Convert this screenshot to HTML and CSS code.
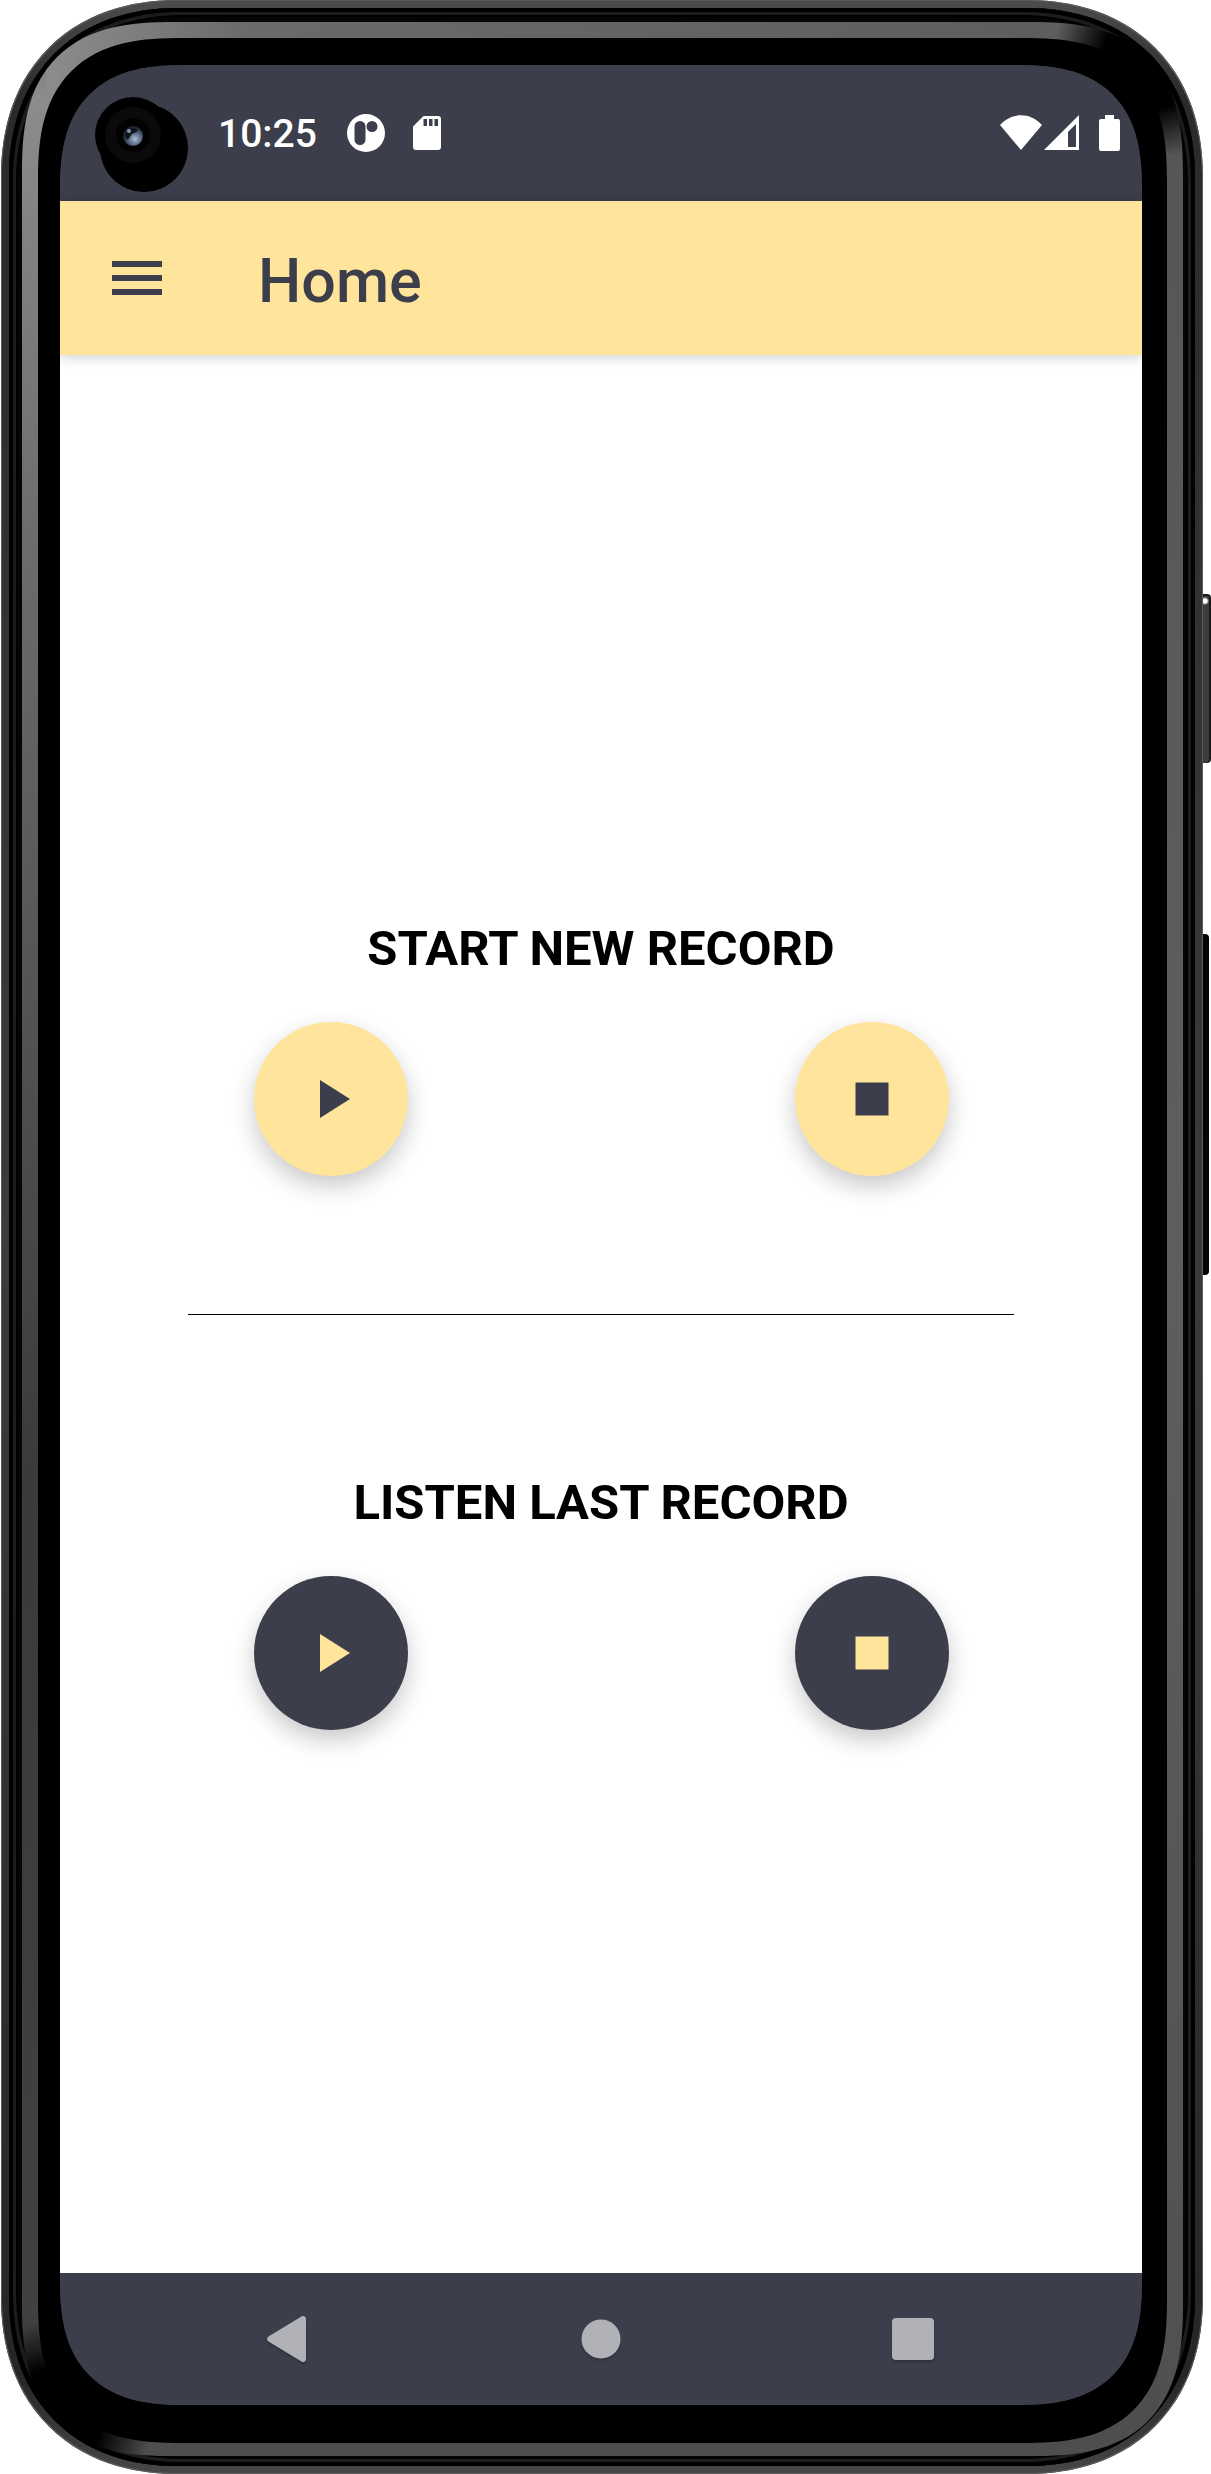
FILE: index.html
```html
<!DOCTYPE html>
<html lang="en">
<head>
<meta charset="utf-8">
<meta name="viewport" content="width=device-width, initial-scale=1">
<title>Home</title>
<link rel="stylesheet" href="styles.css">
</head>
<body>
<div class="phone">
  <span class="side-key side-key-power"></span>
  <span class="side-key side-key-volume"></span>
  <div class="shell">
    <div class="gloss">
      <div class="bezel">
        <div class="screen">
          <svg class="camera" width="94" height="96" viewBox="0 0 94 96" aria-hidden="true">
            <defs>
              <radialGradient id="lens" cx="0.6" cy="0.65" r="0.6">
                <stop offset="0" stop-color="#a9bbdc"/>
                <stop offset="0.5" stop-color="#5c6b85"/>
                <stop offset="1" stop-color="#1b2230"/>
              </radialGradient>
            </defs>
            <circle cx="38" cy="38" r="38"/>
            <circle cx="49" cy="51" r="44"/>
            <circle cx="38" cy="38" r="28" fill="#0a0a0a"/>
            <circle cx="38" cy="38" r="17" fill="#020202"/>
            <circle cx="38" cy="39" r="10" fill="url(#lens)"/>
            <path d="M30 37c3-6 9-8 13-4-2 4-5 2-7 5s-2 5-5 4z" fill="#10141c"/>
            <circle cx="34" cy="34" r="2" fill="#8494b0"/>
          </svg>
          <header class="status-bar">
            <time class="clock">10:25</time>
            <svg width="38" height="38" viewBox="0 0 38 38" aria-hidden="true">
              <path fill="#fff" fill-rule="evenodd" d="M19 0a19 19 0 1 1 0 38a19 19 0 0 1 0-38zM13 7a5.500 5.500 0 0 0-5.500 5.500v13a5.500 5.500 0 0 0 11 0v-13A5.500 5.500 0 0 0 13 7zM25 7a5.500 5.500 0 1 0 0 11a5.500 5.500 0 0 0 0-11z"/>
            </svg>
            <svg class="sd-card" width="28" height="36" viewBox="0 0 28 36" aria-hidden="true">
              <path fill="#fff" fill-rule="evenodd" d="M10.500 1H25a3 3 0 0 1 3 3v28a3 3 0 0 1-3 3H3a3 3 0 0 1-3-3V11.500zM10.500 4v7h3.500V4zM16 4v7h3.500V4zM21.500 4v7H25V4z"/>
            </svg>
            <div class="signals">
              <svg width="42" height="36" viewBox="0 0 42 36" aria-hidden="true">
                <path fill="#fff" d="M0 10C12-3 30-3 42 10L21 35z"/>
              </svg>
              <svg width="35" height="36" viewBox="0 0 35 36" aria-hidden="true">
                <path fill="#fff" fill-rule="evenodd" d="M35 0v35H0zM32 9l-8 8v15h8z"/>
              </svg>
              <svg class="battery" width="21" height="36" viewBox="0 0 21 36" aria-hidden="true">
                <path fill="#fff" d="M6 0h9v4h4a2 2 0 0 1 2 2v28a2 2 0 0 1-2 2H2a2 2 0 0 1-2-2V6a2 2 0 0 1 2-2h4z"/>
              </svg>
            </div>
          </header>

          <div class="app-bar">
            <button class="icon-button" type="button" aria-label="Open menu">
              <svg width="50" height="34" viewBox="0 0 50 34" aria-hidden="true">
                <path fill="currentColor" d="M0 0h50v6H0zM0 14h50v6H0zM0 28h50v6H0z"/>
              </svg>
            </button>
            <h1 class="title">Home</h1>
          </div>

          <main class="content">
            <section class="group-record">
              <h2 class="heading">START NEW RECORD</h2>
              <div class="actions">
                <button class="fab" type="button" aria-label="Start recording">
                  <svg width="64" height="64" viewBox="0 0 64 64" aria-hidden="true"><path fill="currentColor" d="M21 13v38l30-19z"/></svg>
                </button>
                <button class="fab" type="button" aria-label="Stop recording">
                  <svg width="64" height="64" viewBox="0 0 64 64" aria-hidden="true"><path fill="currentColor" d="M15.500 15.500h33v33h-33z"/></svg>
                </button>
              </div>
            </section>
            <hr class="divider">
            <section class="group-listen">
              <h2 class="heading">LISTEN LAST RECORD</h2>
              <div class="actions">
                <button class="fab fab-dark" type="button" aria-label="Play last record">
                  <svg width="64" height="64" viewBox="0 0 64 64" aria-hidden="true"><path fill="currentColor" d="M21 13v38l30-19z"/></svg>
                </button>
                <button class="fab fab-dark" type="button" aria-label="Stop playing">
                  <svg width="64" height="64" viewBox="0 0 64 64" aria-hidden="true"><path fill="currentColor" d="M15.500 15.500h33v33h-33z"/></svg>
                </button>
              </div>
            </section>
          </main>

          <nav class="nav-bar" aria-label="System">
            <button class="icon-button" type="button" aria-label="Back">
              <svg width="46" height="46" viewBox="0 0 46 46" aria-hidden="true"><path fill="currentColor" d="M37 .8a3 3 0 0 1 5 2.200v40a3 3 0 0 1-5 2.200L4.500 25.500a3 3 0 0 1 0-5z"/></svg>
            </button>
            <button class="icon-button" type="button" aria-label="Home screen">
              <svg width="46" height="46" viewBox="0 0 46 46" aria-hidden="true"><circle cx="24" cy="23" r="19.500" fill="currentColor"/></svg>
            </button>
            <button class="icon-button" type="button" aria-label="Recent apps">
              <svg width="46" height="46" viewBox="0 0 46 46" aria-hidden="true"><rect x="2" y="2" width="42" height="42" rx="4" fill="currentColor"/></svg>
            </button>
          </nav>
        </div>
      </div>
    </div>
  </div>
</div>
</body>
</html>
```
FILE: styles.css
```css
:root {
  --ink: #3d3e4b;
  --sand: #ffe49c;
  --corner: superellipse(1.4);
}

* {
  box-sizing: border-box;
}

body {
  margin: 0;
  background: #fff;
  font-family: Roboto, "Noto Sans", sans-serif;
}

svg {
  display: block;
  flex: none;
}

/* Phone body: nested rings from the outer rim in to the glass */
.phone {
  position: relative;
  display: flex;
  min-height: 100vh;
  margin: 0 8px 0 1px;
  padding: 8px;
  border-radius: 160px;
  background: linear-gradient(#4c4c4a, #2a2a2a 4%, #3a3c3b 50%, #262626 96%, #484646);
  box-shadow: inset 0 0 0 1px #5c5c5c;
}

.shell {
  display: flex;
  flex: 1;
  padding: 14px 12px 10px 13px;
  border-radius: 154px;
  background: #050505;
  box-shadow: inset 0 0 0 4px #000, inset 0 0 0 7px #1c1c1c, inset 0 0 0 9px #000;
}

.gloss {
  display: flex;
  flex: 1;
  padding: 16px 16px 13px;
  border-radius: 134px;
  background:
    radial-gradient(circle at calc(100% - 30px) 36px, #000 50px, transparent 100px),
    radial-gradient(circle at 30px calc(100% - 36px), #000 50px, transparent 100px),
    linear-gradient(#6a6a6a, #8c8c8c 3%, #6e6e6e 20%, #3a3a3a 60%, #424242) left / 24px 100% no-repeat,
    linear-gradient(#555, #5e5e5e 50%, #505050) right / 24px 100% no-repeat,
    linear-gradient(90deg, #909090, #6a6a6a 20%, #5c5c5c) top / 100% 50% no-repeat,
    linear-gradient(#4e4e4e, #4e4e4e) bottom / 100% 50% no-repeat;
}

.bezel {
  display: flex;
  flex: 1;
  padding: 27px 25px 38px 22px;
  border-radius: 122px;
  background: #000;
}

.screen {
  position: relative;
  display: flex;
  flex: 1;
  flex-direction: column;
  overflow: hidden;
  border-radius: 104px;
  background: var(--ink);
}

@supports (corner-shape: squircle) {
  .phone,
  .shell {
    border-radius: 178px;
    corner-shape: superellipse(1.15);
  }

  .shell {
    border-radius: 170px;
  }

  .gloss,
  .bezel,
  .screen {
    border-radius: 152px;
    corner-shape: var(--corner);
  }

  .bezel {
    border-radius: 144px;
  }

  .screen {
    border-radius: 128px;
  }
}

.side-key {
  position: absolute;
  left: 100%;
  border-radius: 0 4px 4px 0;
}

.side-key-power {
  top: 24%;
  width: 8px;
  height: 169px;
  background: radial-gradient(circle at 2px 7px, #fff 2px, transparent 4px), #3c3c3c;
  box-shadow: inset -2px 0 0 #1a1a1a, inset 0 2px 0 #1a1a1a;
}

.side-key-volume {
  top: 38%;
  width: 6px;
  height: 341px;
  margin-top: -6px;
  background: #050505;
}

.camera {
  position: absolute;
  top: 32px;
  left: 35px;
}

.status-bar {
  display: flex;
  align-items: center;
  height: 136px;
  padding: 0 22px 0 158px;
  background: var(--ink);
  color: #fff;
}

.clock {
  padding-top: 2px;
  margin-right: 30px;
  font-size: 39px;
  font-weight: 500;
  line-height: 48px;
}

.sd-card {
  margin-left: 28px;
}

.signals {
  display: flex;
  gap: 2px;
  margin-left: auto;
}

.battery {
  margin-left: 18px;
}

.icon-button {
  display: flex;
  padding: 0;
  border: 0;
  background: none;
  color: inherit;
  cursor: pointer;
}

.app-bar {
  position: relative;
  display: flex;
  align-items: center;
  gap: 96px;
  height: 154px;
  padding: 0 52px;
  background: var(--sand);
  color: var(--ink);
  box-shadow: 0 2px 12px rgba(0, 0, 0, 0.2);
}

.title {
  margin: 0;
  padding-top: 6px;
  font-size: 61px;
  font-weight: 500;
  line-height: 72px;
}

.content {
  display: grid;
  flex: 1;
  grid-template-rows: 1fr auto 1fr;
  background: #fff;
}

.group-record {
  align-self: end;
  padding-bottom: 138px;
}

.group-listen {
  padding-top: 158px;
}

.heading {
  margin: 0 0 43px;
  color: #000;
  font-size: 49px;
  font-weight: 700;
  line-height: 60px;
  text-align: center;
}

.actions {
  display: flex;
  justify-content: space-around;
}

.fab {
  display: flex;
  align-items: center;
  justify-content: center;
  width: 154px;
  height: 154px;
  padding: 0;
  border: 0;
  border-radius: 50%;
  background: var(--sand);
  color: var(--ink);
  box-shadow: 0 10px 24px rgba(0, 0, 0, 0.22);
  cursor: pointer;
}

.fab-dark {
  background: var(--ink);
  color: var(--sand);
}

.divider {
  width: calc(100% - 256px);
  height: 1px;
  margin: 0 auto;
  border: 0;
  background: #000;
}

.nav-bar {
  display: flex;
  align-items: center;
  justify-content: space-between;
  height: 132px;
  padding: 0 206px 0 204px;
  background: var(--ink);
  color: #b1b2b8;
}

.nav-bar svg {
  filter: drop-shadow(0 2px 1px rgba(0, 0, 0, 0.2));
}
```
